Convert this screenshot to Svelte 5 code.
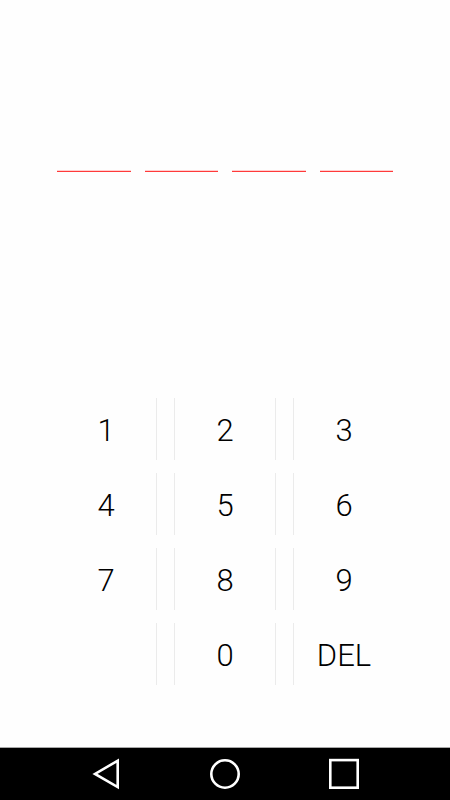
<script lang="ts">
	const CODE_LENGTH = 4;
	const keys = ['1', '2', '3', '4', '5', '6', '7', '8', '9', '', '0', 'DEL'];

	let pin = $state('');
	let slots = $derived(Array.from({ length: CODE_LENGTH }, (_, i) => pin[i] ?? ''));

	function press(key: string) {
		if (key === 'DEL') {
			pin = pin.slice(0, -1);
		} else if (pin.length < CODE_LENGTH) {
			pin += key;
		}
	}
</script>

<div class="screen">
	<main>
		<div class="code">
			{#each slots as digit, i}
				<input class="slot" type="password" value={digit} aria-label="Digit {i + 1}" readonly />
			{/each}
		</div>

		<div class="keypad">
			{#each keys as key}
				{#if key}
					<button class="key" type="button" onclick={() => press(key)}>{key}</button>
				{:else}
					<div class="key"></div>
				{/if}
			{/each}
		</div>
	</main>

	<nav class="navbar">
		<button type="button" aria-label="Back">
			<svg width="32" height="32" viewBox="0 0 32 32">
				<path d="M27.7 2.7 V29.1 L5 16 Z" />
			</svg>
		</button>
		<button type="button" aria-label="Home">
			<svg width="32" height="32" viewBox="0 0 32 32">
				<circle cx="16" cy="16" r="13.7" />
			</svg>
		</button>
		<button type="button" aria-label="Recent apps">
			<svg width="32" height="32" viewBox="0 0 32 32">
				<rect x="2.3" y="2.1" width="27.4" height="27.6" />
			</svg>
		</button>
	</nav>
</div>

<style>
	:global(body) {
		margin: 0;
		background: #fefefe;
	}

	.screen {
		display: flex;
		flex-direction: column;
		min-height: 100vh;
		font-family: Roboto, 'Liberation Sans', sans-serif;
	}

	main {
		flex: 1;
		display: flex;
		flex-direction: column;
		justify-content: space-between;
		padding: 132px 0 62px;
	}

	.code {
		display: grid;
		grid-template-columns: repeat(4, 1fr);
		gap: 14px;
		padding: 0 57px;
	}

	.slot {
		box-sizing: border-box;
		width: 100%;
		height: 40px;
		padding: 0;
		border: 0;
		border-bottom: 1px solid #ff3a3a;
		border-radius: 0;
		outline: none;
		background: transparent;
		box-shadow: inset 0 -1px #ffd0d0;
		font: inherit;
		font-size: 24px;
		text-align: center;
	}

	.keypad {
		display: grid;
		grid-template-columns: repeat(3, 1fr);
		grid-auto-rows: 62px;
		gap: 13px 17px;
		padding: 0 55px;
	}

	.key {
		box-sizing: border-box;
		padding: 4px 0 0;
		border: 1px solid #ebebeb;
		border-width: 0 1px;
		border-radius: 0;
		background: transparent;
		color: #000;
		font: inherit;
		font-size: 31px;
		font-weight: 300;
		line-height: 38px;
		cursor: pointer;
	}

	/* no divider on the outer edges of the pad */
	.key:nth-child(3n + 1) {
		border-left-color: transparent;
	}

	.key:nth-child(3n) {
		border-right-color: transparent;
	}

	.navbar {
		display: grid;
		grid-template-columns: repeat(3, 1fr);
		gap: 17px;
		height: 52px;
		padding: 0 55px;
		border-top: 1px solid #a8a8a8;
		background: #000;
	}

	.navbar button {
		display: flex;
		align-items: center;
		justify-content: center;
		padding: 0;
		border: 0;
		background: transparent;
		cursor: pointer;
	}

	.navbar svg {
		fill: none;
		stroke: #fff;
		stroke-width: 2.6;
	}
</style>
